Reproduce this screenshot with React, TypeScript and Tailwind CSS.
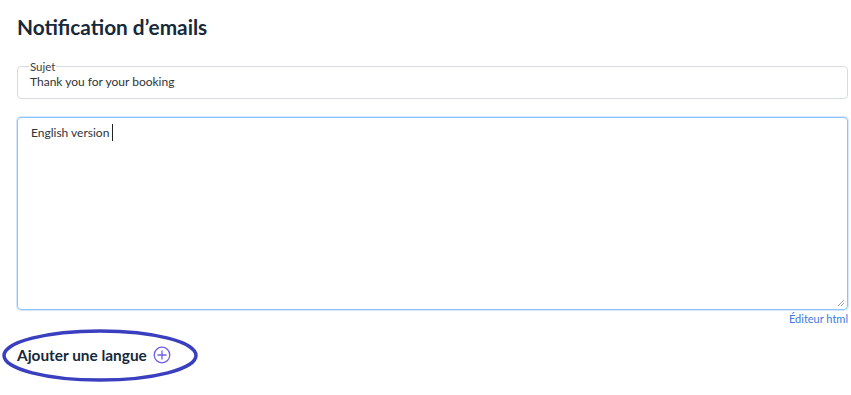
import React from 'react';

export default function App() {
  return (
    <div className="w-[851px] h-[395px] bg-white relative overflow-hidden" style={{ fontFamily: 'Lato, "Open Sans", sans-serif' }}>
      <div className="pl-[17px] pr-[3px] pt-[14px]">
        <h1 className="text-[20.8px] leading-[26px] font-bold text-[#17293a]">Notification d’emails</h1>

        {/* Sujet */}
        <fieldset className="mt-[20px] border border-[#d8dce2] rounded-[4px] px-[12px] pb-[8px] pt-0 min-w-0 h-[39px]">
          <legend className="text-[11.5px] leading-[13px] text-[#3a3f45] px-[1px] -ml-[1px]">Sujet</legend>
          <div className="pt-[2px] text-[12px] leading-[14px] text-[#2e3338]">Thank you for your booking</div>
        </fieldset>

        {/* Message */}
        <div className="mt-[18px] h-[193px] border border-[#8cc3ff] shadow-[0_0_0_1px_#d4e8ff] rounded-[4px] px-[13px] pt-[6px] relative">
          <div className="flex items-center text-[12px] leading-[14px] text-[#2e3338]">
            <span>English version</span>
            <span className="ml-[3px] w-[1px] h-[17px] bg-[#222]" />
          </div>
          <svg className="absolute right-[2px] bottom-[2px]" width="9" height="9" viewBox="0 0 9 9">
            <path d="M8 2 L2 8 M8 5 L5 8" stroke="#9aa0a6" strokeWidth="1" />
          </svg>
        </div>
        <div className="flex justify-end mt-[2px]">
          <span className="text-[11px] leading-[14px] text-[#3b7ae0]">Éditeur html</span>
        </div>

        <div className="mt-[20px] flex items-center gap-[6px]">
          <span className="text-[15.4px] leading-[18px] font-bold text-[#17293a]">Ajouter une langue</span>
          <svg width="18" height="18" viewBox="0 0 18 18">
            <circle cx="9" cy="9" r="7.8" fill="none" stroke="#6a5cf2" strokeWidth="1.3" />
            <path d="M9 4.5 V13.5 M4.5 9 H13.5" stroke="#6a5cf2" strokeWidth="1.3" />
          </svg>
        </div>
      </div>

      {/* annotation ellipse */}
      <svg className="absolute left-0 top-[326px] pointer-events-none" width="210" height="60" viewBox="0 0 210 60">
        <ellipse cx="100" cy="29.5" rx="96" ry="24.5" fill="none" stroke="#3a3fbf" strokeWidth="3.5" />
      </svg>
    </div>
  );
}
